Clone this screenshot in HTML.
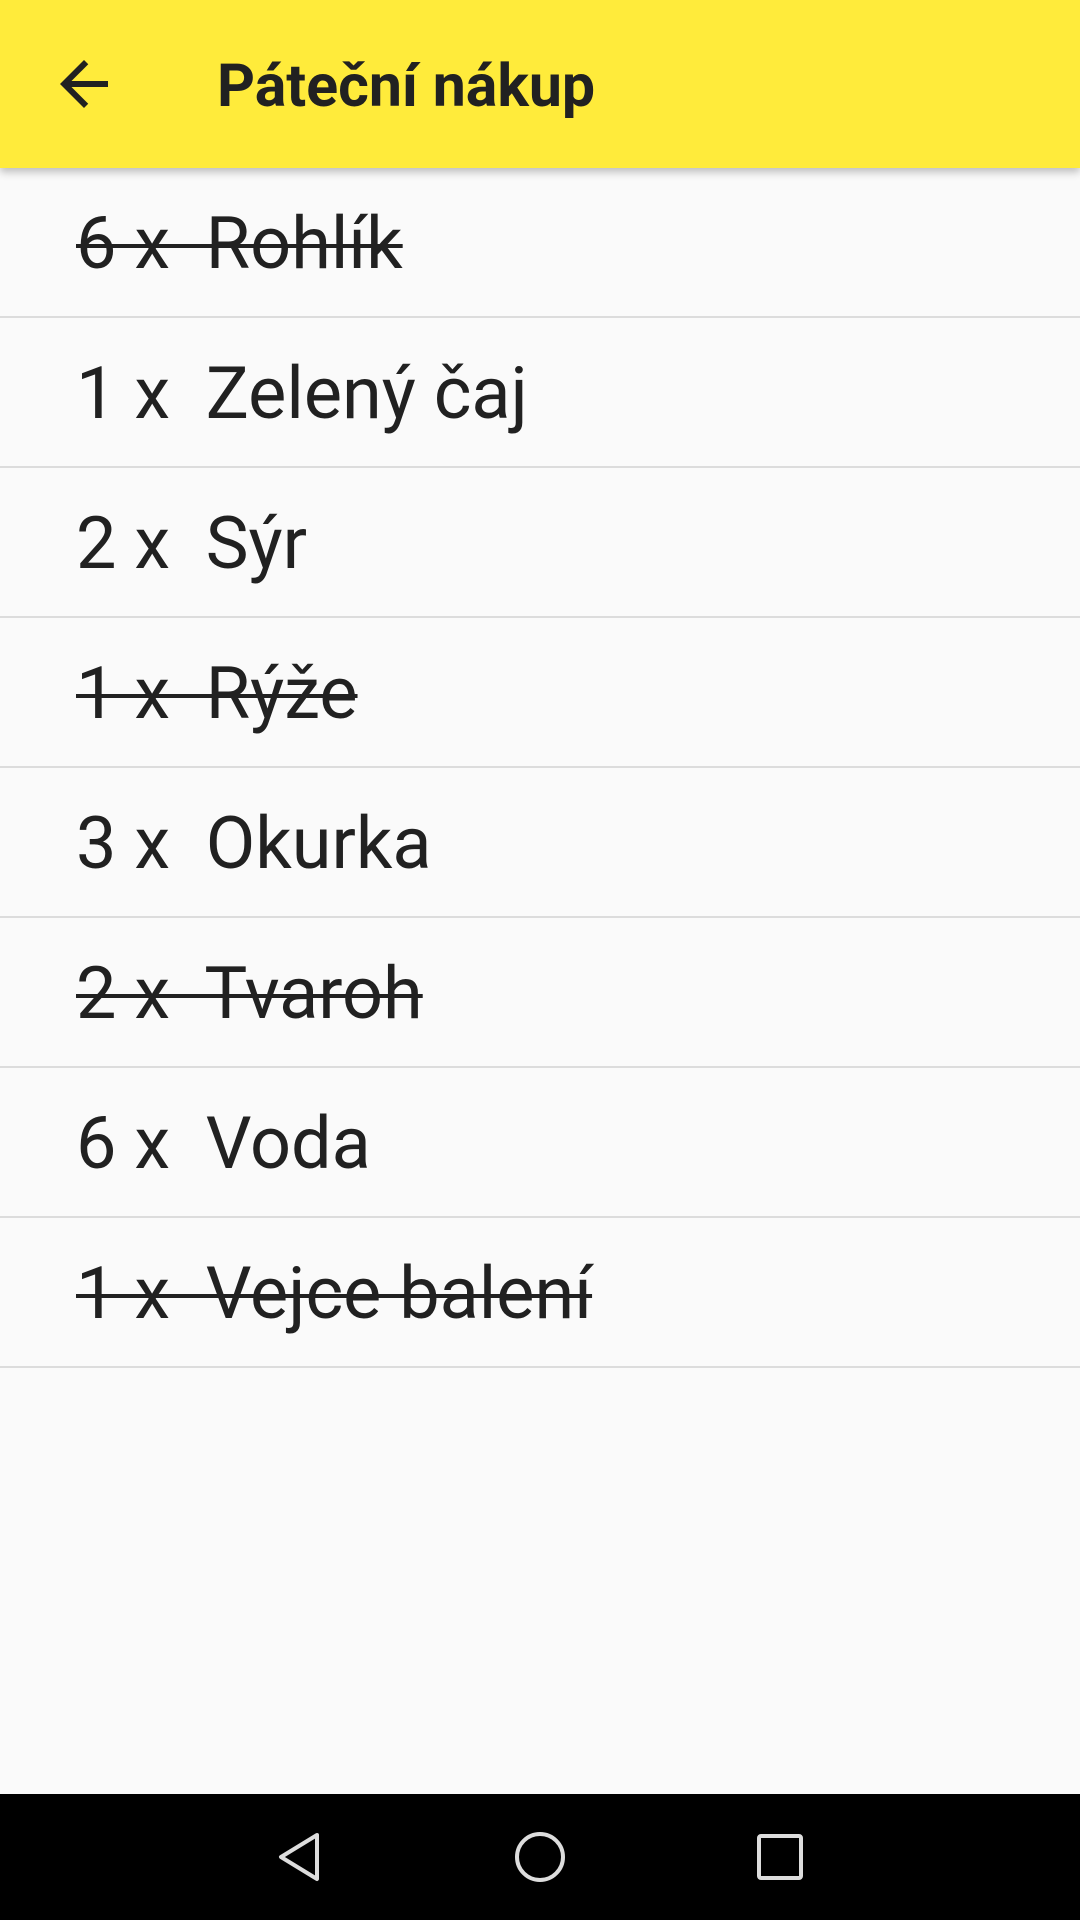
<!DOCTYPE html>
<html><head><meta charset="utf-8"><style>
*{margin:0;padding:0;box-sizing:border-box}
body{width:1080px;height:1920px;background:#fafafa;font-family:"Roboto","Liberation Sans",sans-serif;position:relative;overflow:hidden;color:#212121}
.bar{position:absolute;left:0;top:0;width:1080px;height:168px;background:#ffeb3b;box-shadow:0 4px 8px rgba(0,0,0,0.25);z-index:2}
.bar svg{position:absolute;left:48px;top:48px}
.bar .t{position:absolute;left:217px;top:0;line-height:174px;font-size:59px;font-weight:bold;color:#212121}
.list{position:absolute;top:168px;left:0;width:1080px}
.row{height:150px;border-bottom:2px solid #dcdcdc;padding-left:76px;padding-top:2px;font-size:72px;line-height:148px;white-space:pre}
.s{text-decoration:line-through;text-decoration-thickness:4px}
.nav{position:absolute;left:0;top:1794px;width:1080px;height:126px;background:#000}
.nav svg{position:absolute;top:33px}
</style></head><body>
<div class="bar">
<svg width="72" height="72" viewBox="0 0 24 24"><path d="M20 11H7.83l5.59-5.59L12 4l-8 8 8 8 1.41-1.41L7.83 13H20v-2z" fill="#212121"/></svg>
<div class="t">Páteční nákup</div>
</div>
<div class="list">
<div class="row"><span class="s">6 x  Rohlík</span></div>
<div class="row">1 x  Zelený čaj</div>
<div class="row">2 x  Sýr</div>
<div class="row"><span class="s">1 x  Rýže</span></div>
<div class="row">3 x  Okurka</div>
<div class="row"><span class="s">2 x  Tvaroh</span></div>
<div class="row">6 x  Voda</div>
<div class="row"><span class="s">1 x  Vejce balení</span></div>
</div>
<div class="nav">
<svg style="left:269px" width="60" height="60" viewBox="0 0 60 60"><path d="M48 8 L12 30 L48 52 Z" fill="none" stroke="#ddd" stroke-width="4" stroke-linejoin="round"/></svg>
<svg style="left:510px" width="60" height="60" viewBox="0 0 60 60"><circle cx="30" cy="30" r="23" fill="none" stroke="#ddd" stroke-width="4"/></svg>
<svg style="left:750px" width="60" height="60" viewBox="0 0 60 60"><rect x="9" y="9" width="42" height="42" rx="2" fill="none" stroke="#ddd" stroke-width="4"/></svg>
</div>
</body></html>
